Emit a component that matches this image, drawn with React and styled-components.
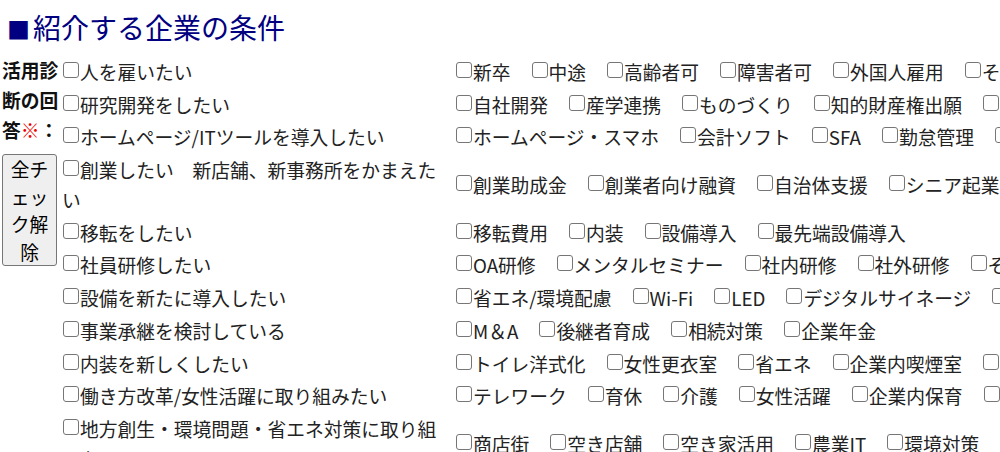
import React from "react";
import styled, { createGlobalStyle } from "styled-components";

const GlobalStyle = createGlobalStyle`
  html, body {
    margin: 0;
    padding: 0;
    overflow: hidden;
    background: #fff;
  }
  body {
    font-family: "Noto Sans CJK JP", "Noto Sans", sans-serif;
    color: #222;
  }
`;

const Page = styled.div`
  width: 1000px;
  height: 452px;
  overflow: hidden;
  padding-left: 2px;
  box-sizing: border-box;
`;

const Title = styled.h2`
  margin: 0;
  padding: 9px 0 0 5px;
  height: 36px;
  font-size: 28px;
  font-weight: normal;
  line-height: 36px;
  color: #000080;
  white-space: nowrap;
`;

const Mark = styled.span`
  font-size: 23px;
  line-height: 1;
  margin-right: 3px;
`;

const Form = styled.div`
  display: flex;
  align-items: flex-start;
  margin-top: 12px;
  font-size: 18.75px;
`;

const Side = styled.div`
  width: 57px;
  flex: none;
  margin-right: 3px;
`;

const Label = styled.div`
  margin-top: -2px;
  font-weight: bold;
  line-height: 30px;
  color: #111;
`;

const Required = styled.span`
  color: #ee0000;
`;

const ResetButton = styled.button`
  display: block;
  width: 55px;
  margin-top: 9px;
  padding: 0 7px;
  border: 1px solid #767676;
  border-radius: 3px;
  background: #efefef;
  color: #000;
  font-family: inherit;
  font-size: 18.75px;
  line-height: 27.5px;
  cursor: pointer;
`;

const Rows = styled.div`
  display: grid;
  grid-template-columns: 385px max-content;
  column-gap: 8px;
  row-gap: 2.7px;
`;

const Question = styled.label`
  line-height: 30px;
`;

const Options = styled.div`
  align-self: center;
  white-space: nowrap;
  line-height: 30px;
`;

const Option = styled.label`
  margin-right: 20px;
`;

const Check = styled.input.attrs({ type: "checkbox" })`
  appearance: none;
  -webkit-appearance: none;
  box-sizing: border-box;
  width: 16px;
  height: 16px;
  margin: 0 1px;
  border: 1px solid #767676;
  border-radius: 3px;
  background: #fff;
  vertical-align: 2px;
  cursor: pointer;

  &:checked {
    background: #0075ff;
    border-color: #0075ff;
  }
`;

const questions = [
  { q: "人を雇いたい", options: ["新卒", "中途", "高齢者可", "障害者可", "外国人雇用", "その他"] },
  { q: "研究開発をしたい", options: ["自社開発", "産学連携", "ものづくり", "知的財産権出願", "その他"] },
  { q: "ホームページ/ITツールを導入したい", options: ["ホームページ・スマホ", "会計ソフト", "SFA", "勤怠管理", "その他"] },
  { q: "創業したい　新店舗、新事務所をかまえたい", options: ["創業助成金", "創業者向け融資", "自治体支援", "シニア起業"] },
  { q: "移転をしたい", options: ["移転費用", "内装", "設備導入", "最先端設備導入"] },
  { q: "社員研修したい", options: ["OA研修", "メンタルセミナー", "社内研修", "社外研修", "その他"] },
  { q: "設備を新たに導入したい", options: ["省エネ/環境配慮", "Wi-Fi", "LED", "デジタルサイネージ", "その他"] },
  { q: "事業承継を検討している", options: ["M＆A", "後継者育成", "相続対策", "企業年金"] },
  { q: "内装を新しくしたい", options: ["トイレ洋式化", "女性更衣室", "省エネ", "企業内喫煙室", "その他"] },
  { q: "働き方改革/女性活躍に取り組みたい", options: ["テレワーク", "育休", "介護", "女性活躍", "企業内保育", "その他"] },
  { q: "地方創生・環境問題・省エネ対策に取り組みたい", options: ["商店街", "空き店舗", "空き家活用", "農業IT", "環境対策"] },
];

const App = () => {
  return (
    <Page>
      <GlobalStyle />
      <Title>
        <Mark>■</Mark>紹介する企業の条件
      </Title>
      <Form>
        <Side>
          <Label>
            活用診断の回答<Required>※</Required>：
          </Label>
          <ResetButton type="button">全チェック解除</ResetButton>
        </Side>
        <Rows>
          {questions.map((row) => (
            <React.Fragment key={row.q}>
              <Question>
                <Check />
                {row.q}
              </Question>
              <Options>
                {row.options.map((opt) => (
                  <Option key={opt}>
                    <Check />
                    {opt}
                  </Option>
                ))}
              </Options>
            </React.Fragment>
          ))}
        </Rows>
      </Form>
    </Page>
  );
};

export default App;
